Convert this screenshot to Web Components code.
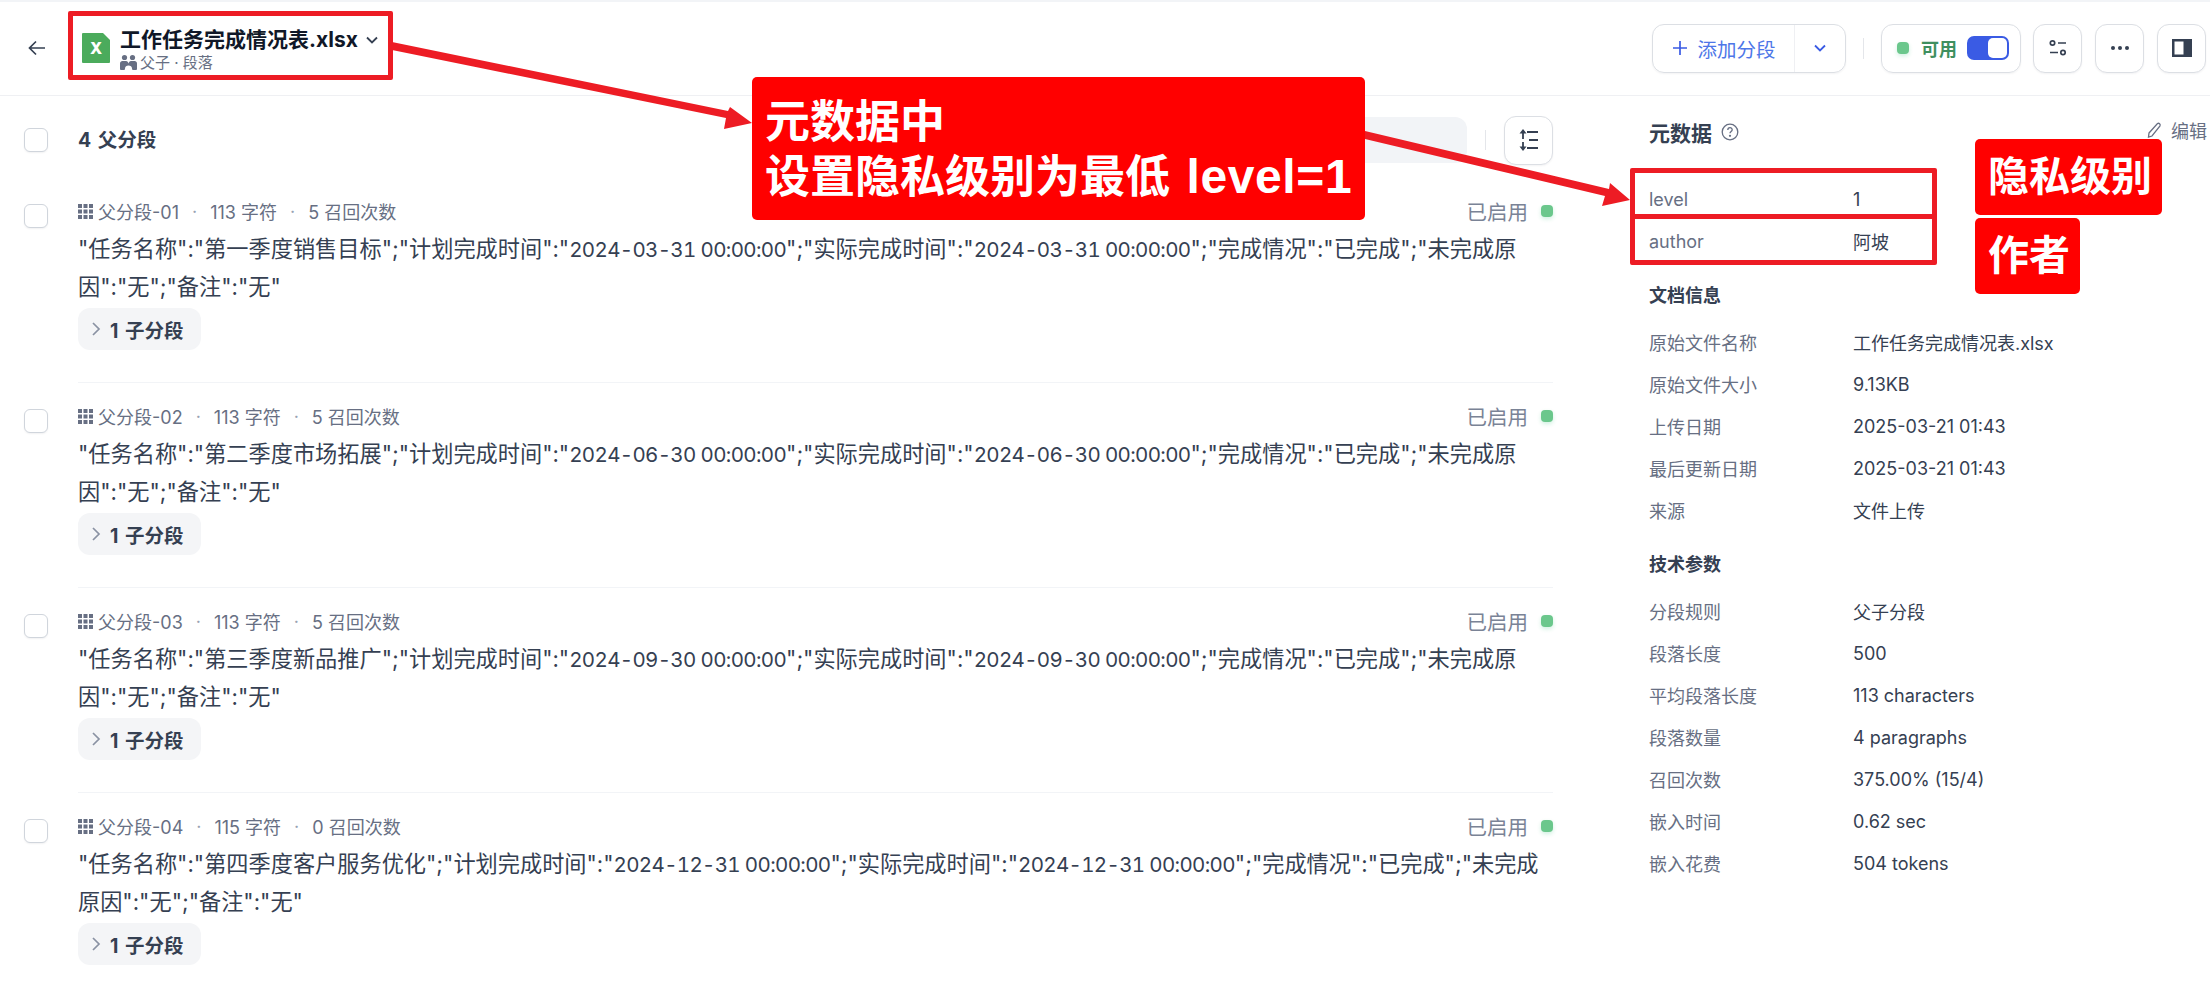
<!DOCTYPE html>
<html lang="zh">
<head>
<meta charset="utf-8">
<title>工作任务完成情况表.xlsx</title>
<style>
  html, body { margin: 0; padding: 0; background: #fff; }
  body { width: 2210px; height: 1002px; overflow: hidden; position: relative;
    font-family: Inter, "Noto Sans CJK SC", sans-serif; color: #354052; }
</style>
</head>
<body>
<doc-page>
  <doc-header slot="header"></doc-header>
  <seg-toolbar slot="toolbar"></seg-toolbar>
  <seg-card slot="main" name="父分段-01" chars="113" hits="5">"任务名称":"第一季度销售目标";"计划完成时间":"<span>2024-03-31 00:00:00</span>";"实际完成时间":"<span>2024-03-31 00:00:00</span>";"完成情况":"已完成";"未完成原<br>因":"无";"备注":"无"</seg-card>
  <seg-card slot="main" name="父分段-02" chars="113" hits="5">"任务名称":"第二季度市场拓展";"计划完成时间":"<span>2024-06-30 00:00:00</span>";"实际完成时间":"<span>2024-06-30 00:00:00</span>";"完成情况":"已完成";"未完成原<br>因":"无";"备注":"无"</seg-card>
  <seg-card slot="main" name="父分段-03" chars="113" hits="5">"任务名称":"第三季度新品推广";"计划完成时间":"<span>2024-09-30 00:00:00</span>";"实际完成时间":"<span>2024-09-30 00:00:00</span>";"完成情况":"已完成";"未完成原<br>因":"无";"备注":"无"</seg-card>
  <seg-card slot="main" name="父分段-04" chars="115" hits="0" last>"任务名称":"第四季度客户服务优化";"计划完成时间":"<span>2024-12-31 00:00:00</span>";"实际完成时间":"<span>2024-12-31 00:00:00</span>";"完成情况":"已完成";"未完成<br>原因":"无";"备注":"无"</seg-card>

  <meta-section slot="side" heading="元数据" help edit>
    <meta-row label="level">1</meta-row>
    <meta-row label="author">阿坡</meta-row>
  </meta-section>
  <meta-section slot="side" heading="文档信息">
    <meta-row label="原始文件名称">工作任务完成情况表.xlsx</meta-row>
    <meta-row label="原始文件大小">9.13KB</meta-row>
    <meta-row label="上传日期">2025-03-21 01:43</meta-row>
    <meta-row label="最后更新日期">2025-03-21 01:43</meta-row>
    <meta-row label="来源">文件上传</meta-row>
  </meta-section>
  <meta-section slot="side" heading="技术参数">
    <meta-row label="分段规则">父子分段</meta-row>
    <meta-row label="段落长度">500</meta-row>
    <meta-row label="平均段落长度">113 characters</meta-row>
    <meta-row label="段落数量">4 paragraphs</meta-row>
    <meta-row label="召回次数">375.00% (15/4)</meta-row>
    <meta-row label="嵌入时间">0.62 sec</meta-row>
    <meta-row label="嵌入花费">504 tokens</meta-row>
  </meta-section>
</doc-page>
<note-layer></note-layer>

<script>
class DocPage extends HTMLElement {
  constructor() {
    super();
    this.attachShadow({ mode: "open" });
    this.shadowRoot.innerHTML = `
      <style>
        :host { display: block; width: 2210px; height: 1002px; border-top: 2px solid #f2f4f7; box-sizing: border-box; }
        .body { display: grid; grid-template-columns: 1553px 561px; column-gap: 96px; }
        .main { padding-left: 24px; }
      </style>
      <slot name="header"></slot>
      <div class="body">
        <div class="main">
          <slot name="toolbar"></slot>
          <slot name="main"></slot>
        </div>
        <div class="side"><slot name="side"></slot></div>
      </div>
    `;
  }
}

class IconButton extends HTMLElement {
  constructor() {
    super();
    this.attachShadow({ mode: "open" });
    this.shadowRoot.innerHTML = `
      <style>
        :host { display: flex; align-items: center; justify-content: center; width: 49px; height: 49px;
          box-sizing: border-box; border: 1.5px solid #dcdfe4; border-radius: 12px; background: #fff;
          box-shadow: 0 1px 2px rgba(16,24,40,.05); flex: none; }
      </style>
      <slot></slot>
    `;
  }
}

class DocHeader extends HTMLElement {
  constructor() {
    super();
    this.attachShadow({ mode: "open" });
    this.shadowRoot.innerHTML = `
      <style>
        :host { display: flex; align-items: center; height: 94px; box-sizing: border-box;
          border-bottom: 1.5px solid #eff0f3; padding: 0 4px 1px 25px; }
        .file { display: flex; align-items: center; margin-left: 33px; }
        .names { margin-left: 10px; padding-top: 2px; }
        .title { display: flex; align-items: center; font-size: 21px; font-weight: 700; color: #101828; line-height: 26px; }
        .title svg { margin-left: 6px; }
        .sub { display: flex; align-items: center; gap: 3px; font-size: 15px; line-height: 18px; color: #676f83; margin-top: 1px; }
        .spacer { flex: 1; }
        .add { display: flex; align-items: center; height: 49px; width: 194px; box-sizing: border-box;
          border: 1.5px solid #dcdfe4; border-radius: 12px; color: #296dff; box-shadow: 0 1px 2px rgba(16,24,40,.05); }
        .add .l { display: flex; align-items: center; gap: 10px; width: 142px; height: 100%; box-sizing: border-box;
          padding-left: 19px; border-right: 1px solid #eff0f3; font-size: 19.5px; color: #4d76e8; }
        .add .r { flex: 1; display: flex; align-items: center; justify-content: center; }
        .sep { width: 1.5px; height: 21px; background: #e4e6ea; margin: 0 17px; }
        .state { display: flex; align-items: center; height: 49px; width: 140px; box-sizing: border-box;
          border: 1.5px solid #dcdfe4; border-radius: 12px; padding-left: 15px; margin-right: 12px;
          box-shadow: 0 1px 2px rgba(16,24,40,.05); }
        .dot { width: 12px; height: 12px; border-radius: 4px; background: #6bc78c; box-shadow: 0 2px 4px rgba(23,178,106,.2); }
        .state span { font-size: 18px; font-weight: 700; color: #3f8f5f; margin: 0 10px 0 12px; white-space: nowrap; }
        .toggle { width: 42px; height: 24px; border-radius: 7px; background: #3a5be4; position: relative; }
        .toggle i { position: absolute; right: 2px; top: 2px; width: 19px; height: 20px; border-radius: 5px; background: #fff; }
        icon-btn + icon-btn { margin-left: 13px; }
      </style>
      <svg width="24" height="24" viewBox="0 0 24 24" fill="none" stroke="#354052" stroke-width="1.7"><path d="M20 12H4.5M11 5.5 4.5 12l6.500 6.500"/></svg>
      <div class="file">
        <svg width="28" height="30" viewBox="0 0 28 30">
          <path d="M1 0h20l7 7v22a1 1 0 0 1-1 1H1a1 1 0 0 1-1-1V1a1 1 0 0 1 1-1z" fill="#4bab5c"/>
          <text x="14" y="21" text-anchor="middle" font-family="Inter" font-weight="800" font-size="16" fill="#fff">X</text>
        </svg>
        <div class="names">
          <div class="title">工作任务完成情况表.xlsx
            <svg width="16" height="16" viewBox="0 0 16 16" fill="none" stroke="#354052" stroke-width="1.8"><path d="M3 5.500 8 10.500l5-5"/></svg>
          </div>
          <div class="sub">
            <svg width="17" height="17" viewBox="0 0 17 17" fill="#676f83"><circle cx="4.500" cy="3.500" r="2.600"/><circle cx="12.500" cy="3.500" r="2.600"/><path d="M0 15V9.500C0 7.500 1.500 7 3.500 7H6c1.500 0 2 1 2.500 2.500C9 8 9.500 7 11 7h2.500C15.500 7 17 7.500 17 9.500V15c0 1-1 1-2 1h-1.500c-1 0-1.500-.5-1.500-1.500 0-2-1.500-3-3.500-3S5 12.500 5 14.500c0 1-.5 1.500-1.500 1.500H2c-1 0-2 0-2-1z"/></svg>
            父子 · 段落
          </div>
        </div>
      </div>
      <div class="spacer"></div>
      <div class="add">
        <div class="l">
          <svg width="16" height="16" viewBox="0 0 16 16" stroke="#3a5be4" stroke-width="1.7"><path d="M8 1v14M1 8h14"/></svg>
          添加分段
        </div>
        <div class="r"><svg width="16" height="16" viewBox="0 0 16 16" fill="none" stroke="#3a5be4" stroke-width="1.8"><path d="M3 5.500 8 10.500l5-5"/></svg></div>
      </div>
      <div class="sep"></div>
      <div class="state"><div class="dot"></div><span>可用</span><div class="toggle"><i></i></div></div>
      <icon-btn><svg width="20" height="20" viewBox="0 0 20 20" fill="none" stroke="#354052" stroke-width="1.7"><circle cx="4.500" cy="5" r="2.200"/><path d="M10 5h8M2 14.500h8"/><circle cx="15" cy="14.500" r="2.200"/></svg></icon-btn>
      <icon-btn><svg width="20" height="6" viewBox="0 0 20 6" fill="#354052"><circle cx="3" cy="3" r="2"/><circle cx="10" cy="3" r="2"/><circle cx="17" cy="3" r="2"/></svg></icon-btn>
      <icon-btn><svg width="20" height="18" viewBox="0 0 20 18"><path fill="#354052" d="M0 0h20v18H0z"/><path fill="#fff" d="M2.500 2.500h9v13h-9z"/></svg></icon-btn>
    `;
  }
}

class SegToolbar extends HTMLElement {
  constructor() {
    super();
    this.attachShadow({ mode: "open" });
    this.shadowRoot.innerHTML = `
      <style>
        :host { display: flex; align-items: center; height: 88px; font-size: 19.5px; font-weight: 700; color: #354052; }
        .label { margin: -3px 0 0 30px; word-spacing: 2px; }
        .spacer { flex: 1; }
        .search { width: 440px; height: 46px; border-radius: 12px; background: #f2f4f7; }
        .sep { width: 1.5px; height: 20px; background: #e4e6ea; margin: 0 18px; }
      </style>
      <seg-check></seg-check>
      <span class="label">4 父分段</span>
      <div class="spacer"></div>
      <div class="search"></div>
      <div class="sep"></div>
      <icon-btn><svg width="20" height="22" viewBox="0 0 20 22" fill="none" stroke="#354052" stroke-width="1.800"><path d="M4 3v7M4 13v7M8 3h11M10 11h9M8 19h11"/><path fill="#354052" stroke="none" d="M4 0 7.500 4.500h-7zM4 22 .5 17.500h7z"/></svg></icon-btn>
    `;
  }
}

class SegCheck extends HTMLElement {
  constructor() {
    super();
    this.attachShadow({ mode: "open" });
    this.shadowRoot.innerHTML = `
      <style>
        :host { display: block; width: 24px; height: 24px; box-sizing: border-box; flex: none;
          border: 1.5px solid #d0d5dc; border-radius: 6px; background: #fff; box-shadow: 0 1px 2px rgba(16,24,40,.06); }
      </style>
    `;
  }
}

class SegCard extends HTMLElement {
  constructor() {
    super();
    this.attachShadow({ mode: "open" });
    this.shadowRoot.innerHTML = `
      <style>
        :host { display: grid; grid-template-columns: 54px minmax(0, 1fr); height: 205px; box-sizing: border-box; padding: 10px 0 6.500px; }
        .check { padding-top: 10px; }
        .body { border-bottom: 1.5px solid #f2f4f7; }
        :host([last]) .body { border-bottom: 0; }
        .meta { display: flex; align-items: center; height: 26px; font-size: 18px; color: #676f83; margin-top: 4px; white-space: nowrap; }
        .meta svg { margin-right: 5px; }
        .meta .d { margin: 0 13px; color: #98a2b2; }
        .status { margin-left: auto; display: flex; align-items: center; gap: 13px; font-size: 20.5px; color: #7a8396; }
        .dot { width: 12px; height: 12px; border-radius: 4px; background: #6bc78c; box-shadow: 0 2px 4px rgba(23,178,106,.2); }
        .text { font-size: 22.200px; line-height: 37px; color: #354052; white-space: nowrap; margin-top: 5.500px; }
        ::slotted(span) { font-size: 20.500px; font-variant-numeric: tabular-nums; letter-spacing: -.65px; }
        .child { display: inline-flex; align-items: center; height: 42px; margin-top: 3.500px; padding: 0 17px 0 12px; gap: 8px;
          border-radius: 12px; background: #f4f5f7; font-size: 19.500px; font-weight: 700; color: #354052; word-spacing: 2px; }
      </style>
      <div class="check"><seg-check></seg-check></div>
      <div class="body">
        <div class="meta">
          <svg width="15" height="15" viewBox="0 0 15 15" fill="#676f83"><path d="M0 0h4v4H0zM5.500 0h4v4h-4zM11 0h4v4h-4zM0 5.500h4v4H0zM5.500 5.500h4v4h-4zM11 5.500h4v4h-4zM0 11h4v4H0zM5.500 11h4v4h-4zM11 11h4v4h-4z"/></svg>
          <span>${this.getAttribute("name")}</span>
          <span class="d">·</span><span>${this.getAttribute("chars")} 字符</span>
          <span class="d">·</span><span>${this.getAttribute("hits")} 召回次数</span>
          <div class="status">已启用<div class="dot"></div></div>
        </div>
        <div class="text"><slot></slot></div>
        <div class="child">
          <svg width="12" height="18" viewBox="0 0 12 18" fill="none" stroke="#8a92a3" stroke-width="1.700"><path d="M3 3l6 6-6 6"/></svg>
          1 子分段
        </div>
      </div>
    `;
  }
}

class MetaSection extends HTMLElement {
  constructor() {
    super();
    this.attachShadow({ mode: "open" });
    const help = this.hasAttribute("help") ? `<svg width="18" height="18" viewBox="0 0 18 18" fill="none" stroke="#676f83" stroke-width="1.300"><circle cx="9" cy="9" r="7.800"/><path d="M6.800 7c0-3 4.400-3 4.400-.2 0 1.700-2.200 1.700-2.200 3.500"/><circle cx="9" cy="12.800" r=".5"/></svg>` : "";
    const edit = this.hasAttribute("edit") ? `<div class="edit"><svg width="15" height="18" viewBox="0 0 15 18" fill="none" stroke="#676f83" stroke-width="1.300"><path d="M2 12 10.500 2.500a1.800 1.800 0 0 1 2.500 2.300L5 15l-3.500 1z"/></svg>编辑</div>` : "";
    this.shadowRoot.innerHTML = `
      <style>
        :host { display: block; }
        .head { display: flex; align-items: center; height: 28px; font-weight: 700; color: #354052; font-size: 18px; margin-bottom: 13.500px; }
        :host([help]) .head { font-size: 21px; margin-top: 22px; margin-bottom: 32px; }
        .head svg { margin-left: 9px; }
        .edit { margin-left: auto; font-size: 18px; font-weight: 400; color: #676f83; display: flex; align-items: center;
          gap: 9px; position: relative; top: -2px; padding-right: 3px; }
        .edit svg { margin: 0; }
        :host(:not([help])) { margin-top: 17.500px; }
      </style>
      <div class="head"><span>${this.getAttribute("heading")}</span>${help}${edit}</div>
      <slot></slot>
    `;
  }
}

class MetaRow extends HTMLElement {
  constructor() {
    super();
    this.attachShadow({ mode: "open" });
    this.shadowRoot.innerHTML = `
      <style>
        :host { display: grid; grid-template-columns: 204px 1fr; height: 42px; align-items: center; font-size: 18px; color: #354052; }
        .label { color: #676f83; }
      </style>
      <div class="label">${this.getAttribute("label")}</div>
      <div><slot></slot></div>
    `;
  }
}

// red callouts painted over the page, placed where they point
class NoteLayer extends HTMLElement {
  constructor() {
    super();
    this.attachShadow({ mode: "open" });
    this.shadowRoot.innerHTML = `
      <style>
        :host { position: absolute; left: 0; top: 0; width: 2210px; height: 1002px; pointer-events: none;
          font-family: "Liberation Sans", "Noto Sans CJK SC", sans-serif; }
        svg { position: absolute; left: 0; top: 0; }
        .note { position: absolute; box-sizing: border-box; background: #ff0000; color: #fff; font-weight: 700;
          border-radius: 5px; white-space: nowrap; }
        .big { left: 752px; top: 77px; width: 613px; height: 143px; padding: 18px 0 0 13px; font-size: 45px; line-height: 55px; }
        .big b { font-size: 48px; letter-spacing: .6px; margin-left: 4px; line-height: 40px; }
        .small { font-size: 41px; line-height: 76px; padding-left: 13px; left: 1975px; height: 76px; }
        .box { position: absolute; box-sizing: border-box; border: 5px solid #ed1c24; border-radius: 2px; }
      </style>
      <div class="box" style="left:68px;top:11px;width:325px;height:69px"></div>
      <div class="box" style="left:1630px;top:168px;width:307px;height:51px"></div>
      <div class="box" style="left:1630px;top:214px;width:307px;height:51px"></div>
      <svg width="2210" height="1002">
        <path fill="#ed1c24" d="M392 42 728 111 730 107 752 123 724 129 726 118 392 50z"/>
        <path fill="#ed1c24" d="M1365 131 1609 189 1610 183 1630 200 1602 206 1605 196 1365 139z"/>
      </svg>
      <div class="note big">元数据中<br>设置隐私级别为最低 <b>level=1</b></div>
      <div class="note small" style="top:139px;width:187px">隐私级别</div>
      <div class="note small" style="top:218px;width:105px">作者</div>
    `;
  }
}

customElements.define("icon-btn", IconButton);
customElements.define("seg-check", SegCheck);
customElements.define("doc-page", DocPage);
customElements.define("doc-header", DocHeader);
customElements.define("seg-toolbar", SegToolbar);
customElements.define("seg-card", SegCard);
customElements.define("meta-section", MetaSection);
customElements.define("meta-row", MetaRow);
customElements.define("note-layer", NoteLayer);
</script>
</body>
</html>
